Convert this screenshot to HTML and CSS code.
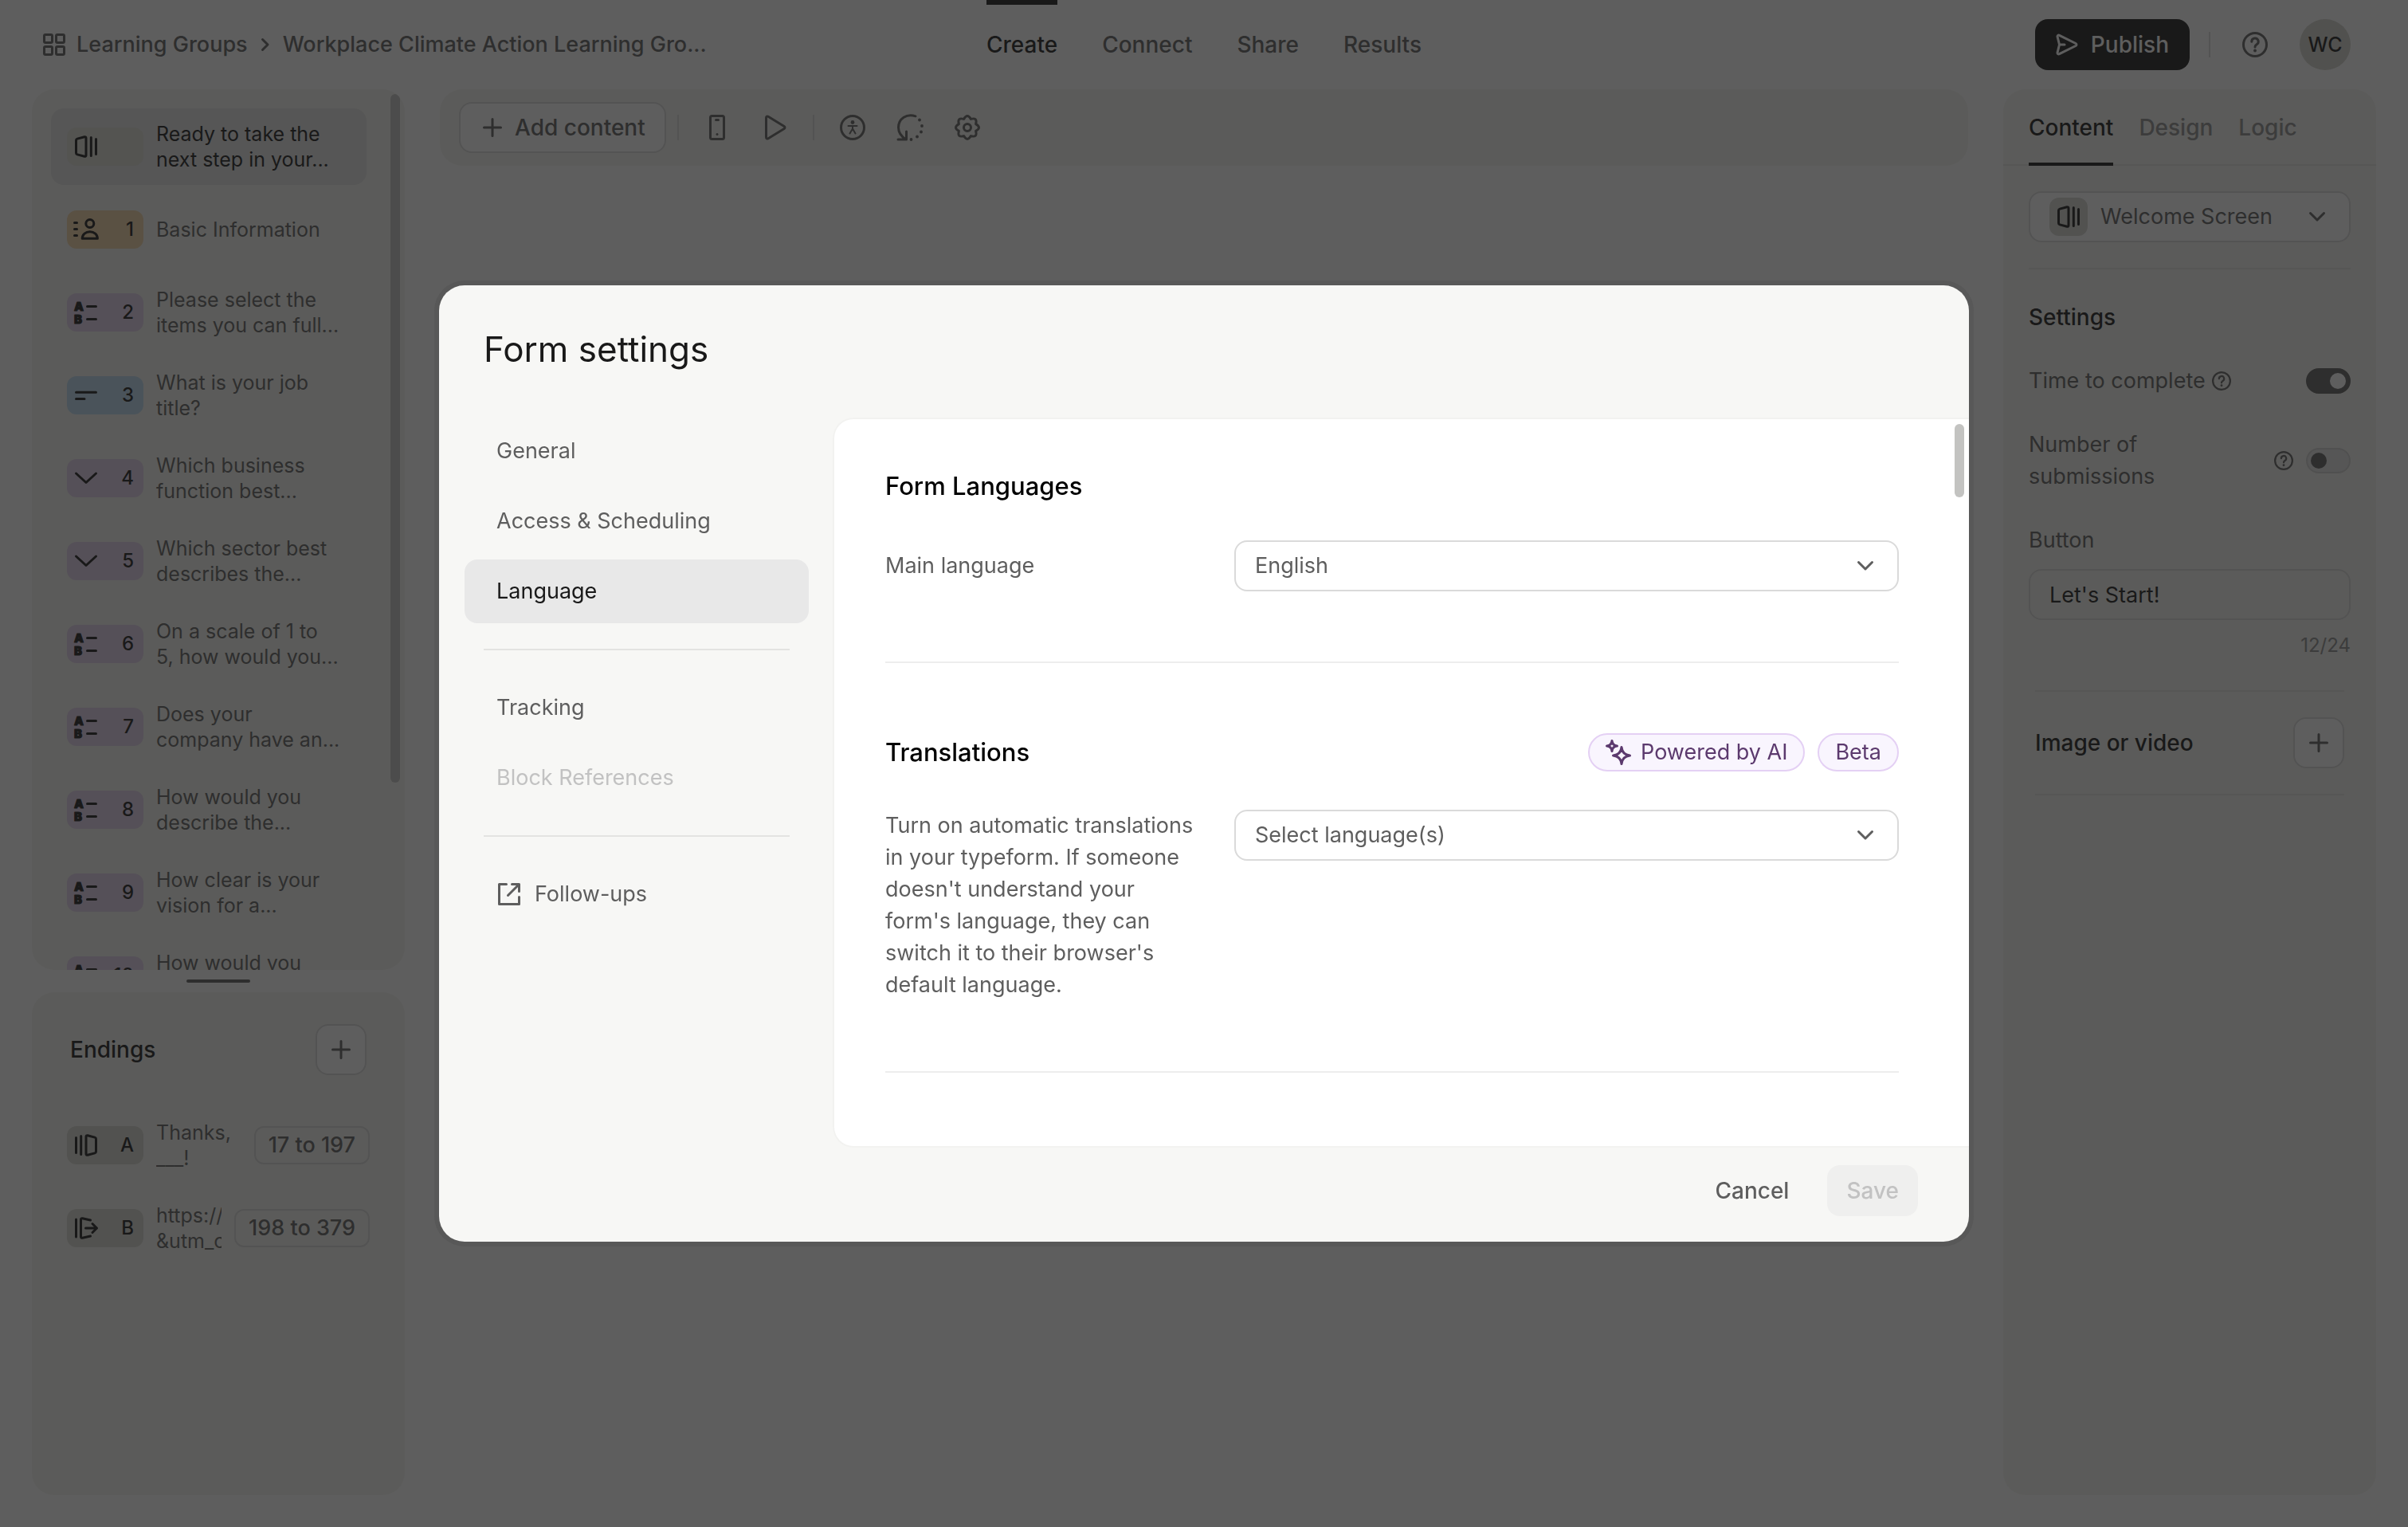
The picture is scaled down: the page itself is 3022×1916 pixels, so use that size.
FILE: index.html
```html
<!DOCTYPE html>
<html lang="en">
<head>
  <meta charset="UTF-8" />
  <meta name="viewport" content="width=device-width, initial-scale=1.0" />
  <title>Form settings – Language</title>

  <link rel="stylesheet" href="styles.css">
</head>
<body>

  <!-- icon sprite -->
  <svg class="sprite" aria-hidden="true">
    <symbol id="i-grid" viewBox="0 0 28 28">
      <rect x="1.5" y="1.5" width="10" height="10" rx="1.5"/><rect x="16.5" y="1.5" width="10" height="10" rx="1.5"/>
      <rect x="1.5" y="16.5" width="10" height="10" rx="1.5"/><rect x="16.5" y="16.5" width="10" height="10" rx="1.5"/>
    </symbol>
    <symbol id="i-right" viewBox="0 0 16 16"><path d="M4.500 1.500 11 8l-6.500 6.500"/></symbol>
    <symbol id="i-down" viewBox="0 0 32 32"><path d="M7.500 11.500 16 20l8.500-8.500"/></symbol>
    <symbol id="i-plus" viewBox="0 0 32 32"><path d="M16 5.500v21M5.500 16h21"/></symbol>
    <symbol id="i-send" viewBox="0 0 28 28"><path d="M2 3.800C2 2.300 3.200 1.700 4.500 2.300L25 12.500c1.300.7 1.300 2.300 0 3L4.500 25.700C3.200 26.300 2 25.700 2 24.200L4.500 14zM4.500 14H11"/></symbol>
    <symbol id="i-help" viewBox="0 0 32 32">
      <circle cx="16" cy="16" r="14.500"/>
      <path d="M11.800 12.200a4.200 4.200 0 1 1 6.200 3.700c-1.400.8-2 1.600-2 3.100"/><circle class="dot" cx="16" cy="23.500" r="1.900"/>
    </symbol>
    <symbol id="i-phone" viewBox="0 0 32 32">
      <rect x="7.500" y="1.500" width="17" height="29" rx="2"/><path d="M14.500 6.500h3"/><circle class="dot" cx="16" cy="24.500" r="1.500"/>
    </symbol>
    <symbol id="i-play" viewBox="0 0 32 32"><path d="M5.500 3.800c0-1.600 1.300-2.300 2.600-1.500l20 12.200c1.200.8 1.200 2.200 0 3l-20 12.200c-1.300.8-2.600.1-2.600-1.500z"/></symbol>
    <symbol id="i-access" viewBox="0 0 32 32">
      <circle cx="16" cy="16" r="14.500"/><circle class="dot" cx="16" cy="9.500" r="2.400"/>
      <path class="thin" d="M10.500 14h11M16 14v4M12.500 23.500 16 17.500l3.500 6"/>
    </symbol>
    <symbol id="i-rotate" viewBox="0 0 32 32">
      <path d="M23 1.800C12-2 1.500 5 1.500 16c0 6.500 4 11.500 9.500 15M11.500 21v10H1"/>
      <g class="dot"><circle cx="28" cy="6.500" r="1.900"/><circle cx="31" cy="14" r="1.900"/><circle cx="30" cy="21.500" r="1.900"/><circle cx="25" cy="27.500" r="1.900"/><circle cx="17.500" cy="31" r="1.900"/></g>
    </symbol>
    <symbol id="i-gear" viewBox="0 0 32 32">
      <path d="M26.600 20.400Q29 29 20.400 26.600 16 34.400 11.600 26.600 3 29 5.400 20.400-2.400 16 5.400 11.600 3 3 11.600 5.400 16-2.400 20.400 5.400 29 3 26.600 11.600 34.400 16 26.600 20.400z"/>
      <circle cx="16" cy="16" r="4.500"/>
    </symbol>
    <symbol id="i-welcome" viewBox="0 0 32 32"><path d="M3.500 8q0-1.500 1.500-1.900L14 3.700q2-.4 2 1.500v21.600q0 1.900-2 1.500L5 25.900Q3.500 25.500 3.500 24zM22.300 4.500v23M28.500 6.500v19"/></symbol>
    <symbol id="i-ending" viewBox="0 0 32 32"><path d="M28.500 8q0-1.500-1.500-1.900L18 3.700q-2-.4-2 1.500v21.600q0 1.900 2 1.500l9-2.400q1.500-.4 1.500-1.900zM9.700 4.500v23M3.500 6.500v19"/></symbol>
    <symbol id="i-redirect" viewBox="0 0 32 32"><path d="M3.500 5v22M21.500 6 11.500 3.700q-2-.4-2 1.500v21.600q0 1.900 2 1.500L21.500 26M15.500 16H29.500M24 10.500l5.500 5.500-5.500 5.500"/></symbol>
    <symbol id="i-contact" viewBox="0 0 32 32">
      <path d="M1.500 7.500h3M1.500 15.500h3M1.500 23.500h3M11.200 27.200c0-5 4.300-8.500 9.600-8.500s9.600 3.500 9.600 8.500z"/><circle cx="20.800" cy="8.500" r="5"/>
    </symbol>
    <symbol id="i-choice" viewBox="0 0 32 32">
      <text x="1" y="14">A</text><text x="1" y="30">B</text><path d="M17.500 8.500h11M17.500 24.500h11"/>
    </symbol>
    <symbol id="i-short" viewBox="0 0 32 32"><path d="M3.500 12.300h25M3.500 20.400H14"/></symbol>
    <symbol id="i-dropdown" viewBox="0 0 32 32"><path d="M3.500 10 16 21.500 28.500 10"/></symbol>
    <symbol id="i-external" viewBox="0 0 32 32"><path d="M12.500 3.500h-9v25h25v-9M19.500 3.500h9v9M28 4 14.500 17.500"/></symbol>
    <symbol id="i-sparkle" viewBox="0 0 32 32">
      <path d="M20 9.500q1 9.500 10.500 10.500Q21 21 20 30.500 19 21 9.500 20 19 19 20 9.500zM8 1.500Q8.600 7.400 14.500 8 8.600 8.600 8 14.500 7.400 8.600 1.500 8 7.400 7.400 8 1.500z"/>
    </symbol>
  </svg>

  <div class="app">

    <!-- Top bar -->
    <header class="topbar">
      <div class="crumbs">
        <a href="#"><svg class="icon icon--md"><use href="#i-grid"/></svg>Learning Groups</a>
        <svg class="icon icon--xs"><use href="#i-right"/></svg>
        <a href="#">Workplace Climate Action Learning Gro...</a>
      </div>
      <nav class="main-nav">
        <a href="#" class="active">Create</a>
        <a href="#">Connect</a>
        <a href="#">Share</a>
        <a href="#">Results</a>
      </nav>
      <div class="account">
        <button class="btn btn--dark"><svg class="icon icon--md"><use href="#i-send"/></svg>Publish</button>
        <span class="vline"></span>
        <button class="icon-btn" aria-label="Help"><svg class="icon"><use href="#i-help"/></svg></button>
        <button class="avatar">WC</button>
      </div>
    </header>

    <main class="workspace">

      <!-- Questions + endings -->
      <aside class="sidebar">
        <section class="panel questions">
          <div class="question active"><span class="tag"><svg class="icon"><use href="#i-welcome"/></svg></span><p>Ready to take the<br>next step in your...</p></div>
          <div class="question"><span class="tag tag--orange"><svg class="icon"><use href="#i-contact"/></svg>1</span><p>Basic Information</p></div>
          <div class="question"><span class="tag tag--purple"><svg class="icon"><use href="#i-choice"/></svg>2</span><p>Please select the<br>items you can full...</p></div>
          <div class="question"><span class="tag tag--blue"><svg class="icon"><use href="#i-short"/></svg>3</span><p>What is your job<br>title?</p></div>
          <div class="question"><span class="tag tag--purple"><svg class="icon"><use href="#i-dropdown"/></svg>4</span><p>Which business<br>function best...</p></div>
          <div class="question"><span class="tag tag--purple"><svg class="icon"><use href="#i-dropdown"/></svg>5</span><p>Which sector best<br>describes the...</p></div>
          <div class="question"><span class="tag tag--purple"><svg class="icon"><use href="#i-choice"/></svg>6</span><p>On a scale of 1 to<br>5, how would you...</p></div>
          <div class="question"><span class="tag tag--purple"><svg class="icon"><use href="#i-choice"/></svg>7</span><p>Does your<br>company have an...</p></div>
          <div class="question"><span class="tag tag--purple"><svg class="icon"><use href="#i-choice"/></svg>8</span><p>How would you<br>describe the...</p></div>
          <div class="question"><span class="tag tag--purple"><svg class="icon"><use href="#i-choice"/></svg>9</span><p>How clear is your<br>vision for a...</p></div>
          <div class="question"><span class="tag tag--purple"><svg class="icon"><use href="#i-choice"/></svg>10</span><p>How would you<br>rate the...</p></div>
          <span class="thumb thumb--questions"></span>
        </section>

        <div class="resizer"></div>

        <section class="panel endings">
          <div class="endings__head">
            <h2>Endings</h2>
            <button class="btn btn--square" aria-label="Add ending"><svg class="icon"><use href="#i-plus"/></svg></button>
          </div>
          <div class="ending"><span class="tag tag--grey"><svg class="icon"><use href="#i-ending"/></svg>A</span><p>Thanks,<br>___!</p><span class="chip">17 to 197</span></div>
          <div class="ending"><span class="tag tag--grey"><svg class="icon"><use href="#i-redirect"/></svg>B</span><p>https://<br>&amp;utm_c</p><span class="chip">198 to 379</span></div>
        </section>
      </aside>

      <!-- Toolbar -->
      <div class="toolbar">
        <button class="btn btn--light"><svg class="icon"><use href="#i-plus"/></svg>Add content</button>
        <span class="vline"></span>
        <div class="tools">
          <button class="icon-btn" aria-label="Mobile preview"><svg class="icon"><use href="#i-phone"/></svg></button>
          <button class="icon-btn" aria-label="Preview"><svg class="icon"><use href="#i-play"/></svg></button>
        </div>
        <span class="vline"></span>
        <div class="tools">
          <button class="icon-btn" aria-label="Accessibility"><svg class="icon"><use href="#i-access"/></svg></button>
          <button class="icon-btn" aria-label="History"><svg class="icon"><use href="#i-rotate"/></svg></button>
          <button class="icon-btn" aria-label="Settings"><svg class="icon"><use href="#i-gear"/></svg></button>
        </div>
      </div>

      <!-- Block properties -->
      <aside class="panel props">
        <nav class="tabs">
          <a href="#" class="active">Content</a>
          <a href="#">Design</a>
          <a href="#">Logic</a>
        </nav>
        <div class="props__body">
          <div class="select select--block">
            <span class="tag tag--grey tag--small"><svg class="icon"><use href="#i-welcome"/></svg></span>
            <select aria-label="Block type"><option>Welcome Screen</option></select>
            <svg class="icon select__arrow"><use href="#i-down"/></svg>
          </div>
          <hr>
          <h2>Settings</h2>
          <div class="setting">
            <label for="time">Time to complete</label>
            <button class="icon-btn help" aria-label="About time to complete"><svg class="icon icon--sm"><use href="#i-help"/></svg></button>
            <input class="toggle" id="time" type="checkbox" checked>
          </div>
          <div class="setting">
            <label for="subs" class="grow">Number of<br>submissions</label>
            <button class="icon-btn help" aria-label="About number of submissions"><svg class="icon icon--sm"><use href="#i-help"/></svg></button>
            <input class="toggle" id="subs" type="checkbox">
          </div>
          <div class="field">
            <label for="btn-text">Button</label>
            <input id="btn-text" type="text" value="Let's Start!" maxlength="24">
            <span class="counter">12/24</span>
          </div>
          <div class="media">
            <h2>Image or video</h2>
            <button class="btn btn--square" aria-label="Add image or video"><svg class="icon"><use href="#i-plus"/></svg></button>
          </div>
        </div>
      </aside>

    </main>
  </div>

  <!-- Form settings modal -->
  <div class="overlay">
    <div class="modal" role="dialog" aria-labelledby="modal-title">
      <h1 id="modal-title">Form settings</h1>

      <div class="modal__body">
        <nav class="side-nav">
          <a href="#">General</a>
          <a href="#">Access &amp; Scheduling</a>
          <a href="#" class="active">Language</a>
          <hr>
          <a href="#">Tracking</a>
          <a class="disabled">Block References</a>
          <hr>
          <a href="#"><svg class="icon"><use href="#i-external"/></svg>Follow-ups</a>
        </nav>

        <div class="content">
          <section>
            <h2>Form Languages</h2>
            <div class="row">
              <label for="main-lang">Main language</label>
              <div class="select">
                <select id="main-lang"><option>English</option></select>
                <svg class="icon select__arrow"><use href="#i-down"/></svg>
              </div>
            </div>
          </section>

          <section>
            <div class="content__head">
              <h2>Translations</h2>
              <span class="badge"><svg class="icon"><use href="#i-sparkle"/></svg>Powered by AI</span>
              <span class="badge">Beta</span>
            </div>
            <div class="row">
              <label for="trans-lang">Turn on automatic translations in your typeform. If someone doesn't understand your form's language, they can switch it to their browser's default language.</label>
              <div class="select">
                <select id="trans-lang"><option>Select language(s)</option></select>
                <svg class="icon select__arrow"><use href="#i-down"/></svg>
              </div>
            </div>
          </section>
          <span class="thumb thumb--content"></span>
        </div>
      </div>

      <footer class="modal__foot">
        <button class="btn btn--plain">Cancel</button>
        <button class="btn btn--save" disabled>Save</button>
      </footer>
    </div>
  </div>

</body>
</html>
```
FILE: styles.css
```css
/* RESET & BASE --------------------------------------------------------*/
*,::before,::after{box-sizing:border-box;margin:0;padding:0}
body{
  font-family:Inter,"Liberation Sans",sans-serif;
  font-size:27px;
  line-height:40px;
  color:#5e5e5e;
  background:#fff;
  overflow:hidden;
}
a{color:inherit;text-decoration:none}
button,input,select{font:inherit;color:inherit;background:none;border:none}
button{cursor:pointer}
h2{font-size:28px;font-weight:500;color:#191919}
hr{border:none;height:2px;background:#e3e3e1}

/* ICONS ---------------------------------------------------------------*/
.sprite{display:none}
.icon{
  flex:none;
  display:block;
  width:32px;height:32px;
  overflow:visible;
  fill:none;
  stroke:currentColor;
  stroke-width:3;
  stroke-linecap:round;
  stroke-linejoin:round;
}
.icon--md{width:28px;height:28px}
.icon--sm{width:24px;height:24px}
.icon--xs{width:16px;height:16px}
symbol{overflow:visible}
symbol text{font-size:15px;font-weight:900;fill:currentColor;stroke-width:1}
.dot{fill:currentColor;stroke:none}
.thin{stroke-width:2}

/* BUTTONS -------------------------------------------------------------*/
.btn{
  display:flex;align-items:center;justify-content:center;
  height:64px;
  padding:0 24px;
  border-radius:16px;
  font-size:28px;font-weight:500;
}
.btn--dark{gap:16px;padding:0 26px;background:#191919;color:#fff}
.btn--light{gap:12px;background:#fff;border:2px solid #dadada}
.btn--square{width:64px;padding:0;background:#fff;border:2px solid #dadada}
.btn--save{background:#efefee;color:#c2c2c2}
.icon-btn{display:block}
.vline{width:2px;height:32px;background:#dadada}

/* TOP BAR -------------------------------------------------------------*/
.app{display:flex;flex-direction:column;height:100vh}
.topbar{
  display:grid;
  grid-template-columns:1fr auto 1fr;
  height:112px;
  padding:0 54px;
  font-weight:500;
}
.crumbs,.crumbs a{display:flex;align-items:center;gap:14px}
.main-nav{display:flex;gap:56px;font-size:28px}
.main-nav a{
  display:flex;align-items:center;
  border-top:6px solid transparent;
  border-bottom:6px solid transparent;
}
.main-nav .active{color:#191919;border-top-color:#191919}
.account{display:flex;align-items:center;justify-content:flex-end;padding-right:18px}
.account .vline{margin:0 40px 0 24px}
.avatar{
  width:64px;height:64px;margin-left:40px;
  border-radius:50%;
  background:#d3d3cb;color:#191919;
  font-size:25px;
}

/* WORKSPACE -----------------------------------------------------------*/
.workspace{
  flex:1;
  min-height:0;
  display:grid;
  grid-template-columns:468px 1fr 468px;
  gap:44px;
  padding:0 40px 40px;
}
.panel{background:#f6f6f0;border-radius:28px}
.toolbar{
  align-self:start;
  display:flex;align-items:center;
  padding:16px 24px;
  background:#f6f6f0;
  border-radius:28px;
}
.toolbar .vline{margin:0 32px}
.toolbar .btn + .vline{margin-left:14px}
.tools{display:flex;gap:40px}

/* SIDEBAR -------------------------------------------------------------*/
.sidebar{
  display:grid;
  grid-template-rows:minmax(0,7fr) 28px minmax(0,4fr);
  min-height:0;
}
.questions{
  position:relative;
  overflow:hidden;
  display:flex;flex-direction:column;gap:8px;
  padding:24px 48px 0 24px;
}
.question{
  flex:none;
  display:flex;align-items:center;gap:16px;
  height:96px;
  padding:0 20px;
  border-radius:16px;
  font-size:25px;line-height:32px;
}
.question p,.ending p{white-space:nowrap}
.question.active{background:#e3e3e3;color:#191919}
.tag{
  flex:none;
  display:flex;align-items:center;justify-content:space-between;
  width:96px;height:48px;
  padding:0 12px 0 8px;
  border-radius:12px;
  background:#dcdcd4;color:#191919;
  font-size:24px;font-weight:500;
}
.tag--orange{background:#f0d2a6}
.tag--purple{background:#e0d0ea}
.tag--blue{background:#bcdaf0}
.tag--grey{background:#d6d6d0}
.tag--small{width:48px;padding:0 8px}
.thumb{
  position:absolute;
  width:12px;
  border-radius:6px;
  background:#c3c3c1;
}
.thumb--questions{top:6px;right:6px;height:864px}
.thumb--content{top:6px;right:6px;height:92px}
.resizer{place-self:center;width:80px;height:4px;border-radius:2px;background:#5e5e5e}

.endings{padding:40px 44px}
.endings__head{
  display:flex;align-items:center;justify-content:space-between;
  margin-bottom:56px;
  padding:0 4px;
}
.ending{
  display:flex;align-items:center;gap:16px;
  margin-bottom:40px;
  font-size:25px;line-height:32px;
}
.ending p{flex:1;min-width:0;overflow:hidden}
.chip{
  height:48px;
  padding:0 16px;
  border:2px solid #dadada;border-radius:12px;
  font-size:27px;line-height:44px;font-weight:500;
}

/* PROPERTIES ----------------------------------------------------------*/
.tabs{
  display:flex;gap:32px;
  height:96px;
  padding:0 32px;
  border-bottom:2px solid #e3e3e1;
  color:#8c8c8c;font-size:28px;font-weight:500;
}
.tabs a{
  display:flex;align-items:center;
  margin-bottom:-2px;
  border-top:4px solid transparent;
  border-bottom:4px solid transparent;
}
.tabs .active{color:#191919;border-bottom-color:#191919}
.props__body{padding:32px}
.props__body > hr{margin:32px 0 40px}
.setting{display:flex;align-items:center;gap:8px;margin-top:40px}
.grow{flex:1}
.help{margin-right:8px}
.toggle{
  appearance:none;
  width:56px;height:32px;
  margin-left:auto;
  padding:4px;
  border:2px solid #d0d0d0;border-radius:16px;
  background:#e3e3e3;
  cursor:pointer;
}
.toggle::before{content:"";display:block;width:20px;height:20px;border-radius:50%;background:#5e5e5e}
.toggle:checked{border-color:#5e5e5e;background:#5e5e5e}
.toggle:checked::before{margin-left:auto;background:#fff}
.field{display:flex;flex-direction:column;gap:16px;margin-top:40px}
.field input{
  width:100%;height:64px;
  padding:0 24px;
  border:2px solid #dadada;border-radius:16px;
  color:#191919;
}
.counter{align-self:flex-end;font-size:24px;line-height:32px;color:#8c8c8c}
.media{
  display:flex;align-items:center;justify-content:space-between;
  margin:40px 8px 0;
  padding:32px 0;
  border-top:2px solid #e3e3e1;
  border-bottom:2px solid #e3e3e1;
}

/* SELECT --------------------------------------------------------------*/
.select{
  position:relative;
  display:flex;align-items:center;
  height:64px;
  border:2px solid #dadada;border-radius:16px;
  background:#fff;
}
.select select{
  appearance:none;
  flex:1;
  min-width:0;height:100%;
  padding:0 64px 0 24px;
  border-radius:14px;
  cursor:pointer;
}
.select__arrow{position:absolute;right:24px;pointer-events:none}
.select--block .tag{margin-left:24px}
.select--block select{padding-left:16px}

/* MODAL ---------------------------------------------------------------*/
.overlay{
  position:fixed;inset:0;
  display:flex;align-items:center;justify-content:center;
  background:rgba(25,25,25,.7);
}
.modal{
  display:flex;flex-direction:column;
  width:90%;max-width:1920px;
  height:90%;max-height:1200px;
  overflow:hidden;
  border-radius:32px;
  background:#f7f7f5;
  box-shadow:0 0 0 6px rgba(25,25,25,.1);
}
.modal h1{
  padding:56px 56px 64px;
  font-size:44px;line-height:48px;font-weight:400;color:#191919;
}
.modal__body{
  flex:1;
  min-height:0;
  display:grid;
  grid-template-columns:432px 1fr;
  gap:32px;
  padding-left:32px;
}
.side-nav{display:flex;flex-direction:column;gap:8px}
.side-nav a{
  display:flex;align-items:center;gap:16px;
  height:80px;
  padding:0 40px;
  border-radius:16px;
}
.side-nav .active{background:#e8e8e8;color:#191919}
.side-nav .disabled{color:#c2c2c2}
.side-nav hr{margin:24px}

.content{
  position:relative;
  overflow:hidden;
  padding:0 88px 0 64px;
  border-radius:24px 0 0 24px;
  background:#fff;
  box-shadow:0 0 0 2px rgba(25,25,25,.02);
}
.content section{padding:88px 0;border-bottom:2px solid #ededed}
.content section:first-child{padding-top:64px}
.content h2{margin-right:auto;font-size:31px;color:#000}
.content__head{display:flex;align-items:center;gap:16px;height:48px}
.row{
  display:grid;
  grid-template-columns:398px 1fr;
  gap:40px;
  align-items:start;
  margin-top:48px;
}
.row label{align-self:center}
.badge{
  display:flex;align-items:center;gap:12px;
  height:48px;
  padding:0 20px;
  border:2px solid #e4d0f4;border-radius:24px;
  background:#f9f5fe;color:#5c3a6e;
}

.modal__foot{
  display:flex;align-items:center;justify-content:flex-end;gap:24px;
  height:120px;
  padding:0 64px 8px;
}
```
